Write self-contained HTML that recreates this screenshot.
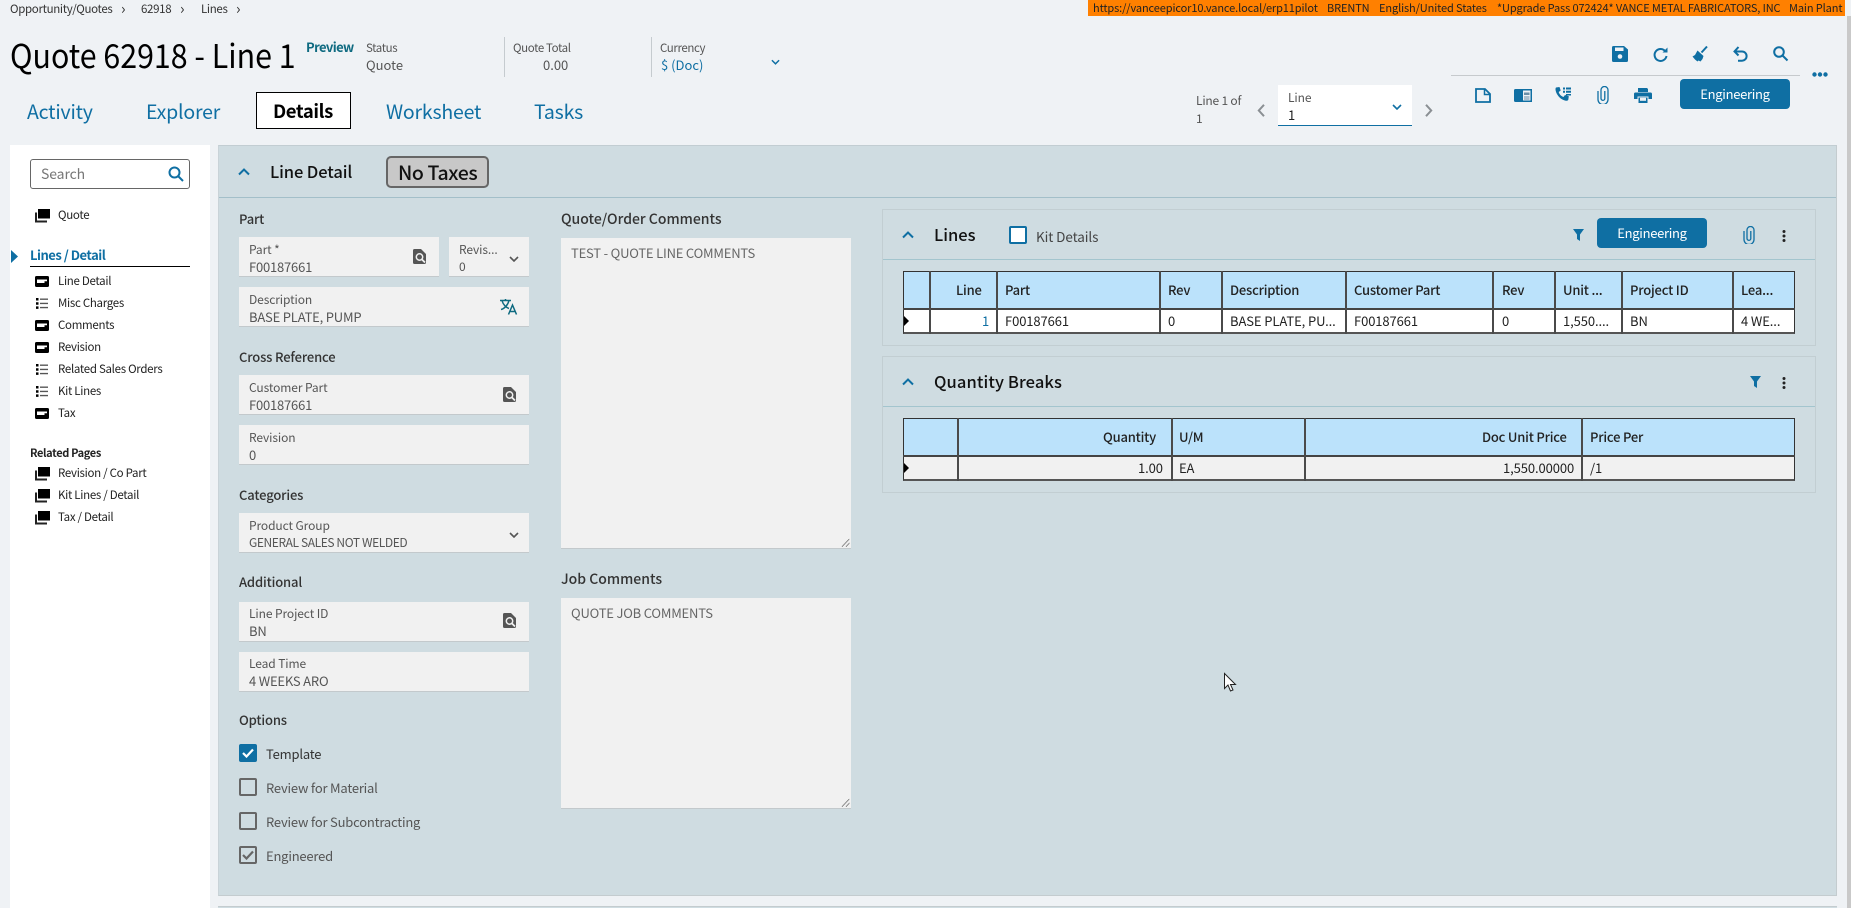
<!DOCTYPE html>
<html lang="en"><head><meta charset="utf-8"><title>Quote 62918 - Line 1</title>
<style>
html,body{margin:0;padding:0;width:1851px;height:908px;overflow:hidden;background:#eff2f5}
body{position:relative;font-family:"Noto Sans CJK JP","Liberation Sans",sans-serif;color:#222;font-size:13px}
.t{position:absolute;white-space:nowrap;line-height:20px;height:20px}
.b{position:absolute;box-sizing:border-box}
.i{position:absolute;overflow:visible}
.bl{fill:#0f6fa3}
.sl{fill:none;stroke:#0f6fa3;stroke-width:2}
.tab{font-size:19.5px;letter-spacing:-.2px;color:#0f6fa3;line-height:30px;height:30px}
.top{font-size:11.5px;letter-spacing:-.4px;color:#555}
.crumb{font-size:11.5px;letter-spacing:-.33px;color:#333}
.arr{font-size:15px;color:#333}
.org{font-size:11px;letter-spacing:-.11px;color:#222}
.nav{font-size:11.5px;letter-spacing:-.3px;color:#222}
.h{font-size:13px;letter-spacing:-.15px;font-weight:500;color:#333}
.h2{font-size:14px;font-weight:500;color:#333}
.f{position:absolute;box-sizing:border-box;background:#f1f1f1;border-bottom:1px solid #c3c9cc;height:40px}
.lb{font-size:12px;letter-spacing:-.1px;color:#555}
.v{font-size:13px;letter-spacing:-.2px;color:#555}
.ck{position:absolute;box-sizing:border-box;width:18px;height:18px;border:2px solid #666;border-radius:2px}
.c{font-size:13px;letter-spacing:-.2px;color:#555}
.p{position:absolute;box-sizing:border-box;border:1px solid #c2ced2}
.th{font-size:13px;letter-spacing:-.2px;font-weight:500;color:#222}
.td{font-size:13px;letter-spacing:-.1px;color:#222}
.sep{position:absolute;width:2px;background:#4a4a4a}
.btn{position:absolute;background:#0f6fa3;border-radius:4px;color:#fff;font-size:13px;letter-spacing:-.3px;line-height:30px;text-align:center;height:30px;width:110px}
</style></head><body>
<svg width="0" height="0" style="position:absolute">
<defs>
<symbol id="stack" viewBox="0 0 16 14"><path d="M4 0h12v9.500H4z" fill="#000"/><path d="M1 3.500h2V11.500H13V13.500H1z" fill="#222"/></symbol>
<symbol id="card" viewBox="0 0 14 11"><rect width="14" height="11" rx="1.500" fill="#000"/><path d="M2 3.500h10v1.800H9.500v1.700H2z" fill="#fff"/></symbol>
<symbol id="list" viewBox="0 0 12 11"><path d="M0 0h2.500v2.500H0zM0 4.200h2.500v2.500H0zM0 8.400h2.500v2.500H0z" fill="#000"/><path d="M4 .5h8v1.400H4zM4 4.700h8v1.400H4zM4 8.900h8v1.400H4z" fill="#555"/></symbol>
<symbol id="srch" viewBox="0 0 13 15"><path d="M1.500 0H8l5 5v8.500a1.500 1.500 0 0 1-1.500 1.500h-10A1.500 1.500 0 0 1 0 13.500v-12A1.500 1.500 0 0 1 1.500 0z" fill="#555"/><circle cx="6.500" cy="8" r="3.200" fill="#555" stroke="#f1f1f1" stroke-width="1.500"/><path d="M9 10.500l3 3" stroke="#f1f1f1" stroke-width="1.800"/></symbol>
<symbol id="clip" viewBox="0 0 12 18"><path d="M1 5v8.500a5 5 0 0 0 10 0V4a3.500 3.500 0 0 0-7 0v8.500a1.800 1.800 0 0 0 3.800 0V5" fill="none" stroke="#0f6fa3" stroke-width="1.300"/></symbol>
<symbol id="filter" viewBox="0 0 11 12"><path d="M0 0h11L7 5.500V12L4 10V5.500z" fill="#0f6fa3"/></symbol>
<symbol id="kebab" viewBox="0 0 4 12"><circle cx="2" cy="1.500" r="1.500" fill="#222"/><circle cx="2" cy="6" r="1.500" fill="#222"/><circle cx="2" cy="10.500" r="1.500" fill="#222"/></symbol>
<symbol id="down" viewBox="0 0 10 6"><path d="M1 1l4 4 4-4" fill="none" stroke="#0f6fa3" stroke-width="1.600"/></symbol>
<symbol id="downg" viewBox="0 0 10 6"><path d="M1 1l4 4 4-4" fill="none" stroke="#555" stroke-width="1.600"/></symbol>
<symbol id="up" viewBox="0 0 12 8"><path d="M1 6.500l5-5 5 5" fill="none" stroke="#0f6fa3" stroke-width="2"/></symbol>
<symbol id="ok" viewBox="0 0 12 10"><path d="M1 5l3.500 3.500L11 1.500" fill="none" stroke-width="2.200"/></symbol>
</defs></svg>

<!-- top -->
<div class="t crumb" style="left:10px;top:-1px">Opportunity/Quotes</div>
<div class="t arr" style="left:121px;top:-1px">›</div>
<div class="t crumb" style="left:141px;top:-1px">62918</div>
<div class="t arr" style="left:180px;top:-1px">›</div>
<div class="t crumb" style="left:201px;top:-1px">Lines</div>
<div class="t arr" style="left:236px;top:-1px">›</div>

<div class="b" style="left:1088px;top:0;width:757px;height:16px;background:#ff8000"></div>
<div class="t org" style="left:1093px;top:-2px">https://vanceepicor10.vance.local/erp11pilot</div>
<div class="t org" style="left:1327px;top:-2px">BRENTN</div>
<div class="t org" style="left:1379px;top:-2px">English/United States</div>
<div class="t org" style="left:1497px;top:-2px">*Upgrade Pass 072424* VANCE METAL FABRICATORS, INC</div>
<div class="t org" style="left:1789px;top:-2px">Main Plant</div>

<div class="t" style="left:10px;top:34px;font-size:33px;line-height:40px;height:40px;color:#000;transform:scaleX(.92);transform-origin:0 50%">Quote 62918 - Line 1</div>
<div class="t" style="left:306px;top:37px;font-size:13px;letter-spacing:-.6px;font-weight:700;color:#0e6a80">Preview</div>
<div class="t top" style="left:366px;top:38px">Status</div>
<div class="t" style="left:366px;top:55px;font-size:13px;color:#555">Quote</div>
<div class="b" style="left:504px;top:37px;width:1px;height:40px;background:#c5cbcf"></div>
<div class="t top" style="left:513px;top:38px">Quote Total</div>
<div class="t" style="left:543px;top:55px;font-size:13px;color:#555">0.00</div>
<div class="b" style="left:651px;top:37px;width:1px;height:40px;background:#c5cbcf"></div>
<div class="t top" style="left:660px;top:38px">Currency</div>
<div class="t" style="left:661px;top:55px;font-size:13px;color:#0f6fa3">$ (Doc)</div>
<svg class="i" style="left:771px;top:59px" width="9" height="6"><use href="#down"/></svg>

<div class="t tab" style="left:27px;top:96px">Activity</div>
<div class="t tab" style="left:146px;top:96px">Explorer</div>
<div class="b" style="left:256px;top:92px;width:95px;height:37px;background:#fff;border:1px solid #000"></div>
<div class="t tab" style="left:273px;top:96px;color:#000;font-weight:700;font-size:18.500px;letter-spacing:-.4px">Details</div>
<div class="t tab" style="left:386px;top:96px">Worksheet</div>
<div class="t tab" style="left:534px;top:96px">Tasks</div>

<div class="t" style="left:1196px;top:91px;font-size:12px;letter-spacing:-.2px;color:#555">Line 1 of</div>
<div class="t" style="left:1196px;top:109px;font-size:12px;color:#555">1</div>
<svg class="i" style="left:1257px;top:104px" width="8" height="13"><path d="M7 .8L1.800 6.500 7 12.200" fill="none" stroke="#8a8f93" stroke-width="2"/></svg>
<div class="b" style="left:1278px;top:85px;width:134px;height:41px;background:#fff;border-bottom:1px solid #0f6fa3"></div>
<div class="t lb" style="left:1288px;top:88px">Line</div>
<div class="t" style="left:1288px;top:105px;font-size:13px;color:#222">1</div>
<svg class="i" style="left:1392px;top:104px" width="10" height="6"><use href="#down"/></svg>
<svg class="i" style="left:1425px;top:104px" width="8" height="13"><path d="M1 .8l5.200 5.700L1 12.200" fill="none" stroke="#8a8f93" stroke-width="2"/></svg>

<!-- top right icons -->
<svg class="i" style="left:1612px;top:46px" width="16" height="16"><path d="M1.500 0H12l4 3.500v11a1.500 1.500 0 0 1-1.500 1.500h-13A1.500 1.500 0 0 1 0 14.500v-13A1.500 1.500 0 0 1 1.500 0z" class="bl"/><rect x="3" y="1.500" width="8.500" height="3.500" fill="#eff2f5"/><circle cx="8" cy="10.500" r="2.300" fill="#eff2f5"/></svg>
<svg class="i" style="left:1653px;top:47px" width="15" height="15"><path d="M12.500 4.500A6 6 0 1 0 13.500 9" class="sl"/><path d="M9.500 5.500h5V.5z" class="bl"/></svg>
<svg class="i" style="left:1691px;top:46px" width="18" height="17"><path d="M10.500 6.500L16 .5" class="sl"/><path d="M6.500 4.500l6 5.500-1 3-2 2.500-2-1-1 1-2.500-2-2.500-3 2.500-1.500z" class="bl"/></svg>
<svg class="i" style="left:1733px;top:46px" width="15" height="17"><path d="M1.500 5.500h7.500a4.600 4.600 0 0 1 0 9.200H5" class="sl"/><path d="M5.500 1L1.500 5.500 5.500 9.500" class="sl"/></svg>
<svg class="i" style="left:1773px;top:46px" width="15" height="15"><circle cx="6" cy="6" r="4.800" class="sl"/><path d="M9.500 9.500l5 5" class="sl"/></svg>
<div class="b" style="left:1451px;top:75px;width:349px;height:1px;background:#c6cacd"></div>
<svg class="i" style="left:1812px;top:72px" width="16" height="5"><circle cx="2.500" cy="2.500" r="2.200" class="bl"/><circle cx="8" cy="2.500" r="2.200" class="bl"/><circle cx="13.500" cy="2.500" r="2.200" class="bl"/></svg>
<svg class="i" style="left:1475px;top:88px" width="16" height="15"><path d="M1 1h9l5 5v8H1z" fill="none" stroke="#0f6fa3" stroke-width="1.800"/><path d="M9.500 1v5.500H15" fill="none" stroke="#0f6fa3" stroke-width="1.500"/></svg>
<svg class="i" style="left:1514px;top:89px" width="18" height="13"><path d="M1.500 0H18v13H1.500A1.500 1.500 0 0 1 0 11.500v-10A1.500 1.500 0 0 1 1.500 0z" class="bl"/><rect x="9" y="1.500" width="7.500" height="10" fill="#eff2f5"/><path d="M10 3.500h5.500v2.500H10z" fill="#6a8fa8"/><path d="M10 7.500h5.500v1H10zM10 9.500h5.500v1H10z" fill="#6a8fa8"/></svg>
<svg class="i" style="left:1555px;top:87px" width="16" height="16"><path d="M1 .5l3.500-.5 1.200 3.500-2 1.500c.8 2.500 2.300 4 4.800 5l1.500-2 3.800 1.300-.5 3.500c-.3.800-1 1-2 1C5.500 13 1 7.500.5 2.500 .5 1.500.6 1 1 .5z" class="bl"/><path d="M8 .5h2v2H8zM11 .5h5v2h-5zM8 3.800h2v2H8zM11 3.800h5v2h-5zM11 7h5v1.500h-5z" fill="#0f6fa3"/></svg>
<svg class="i" style="left:1597px;top:86px" width="12" height="18"><use href="#clip"/></svg>
<svg class="i" style="left:1634px;top:88px" width="18" height="15"><path d="M4 0h9l1 1v3H4z" class="bl"/><path d="M1.500 4.500h15A1.500 1.500 0 0 1 18 6v5h-3.500V8.500h-11V11H0V6a1.500 1.500 0 0 1 1.500-1.500z" class="bl"/><rect x="4.500" y="9.500" width="9" height="5.500" class="bl"/><rect x="6" y="9.800" width="6" height="3" fill="#eff2f5"/></svg>
<div class="btn" style="left:1680px;top:79px">Engineering</div>

<div class="b" style="left:1847px;top:16px;width:4px;height:892px;background:#c9c9c9"></div>

<!-- sidebar -->
<div class="b" style="left:10px;top:145px;width:200px;height:763px;background:#fff"></div>
<div class="b" style="left:30px;top:159px;width:160px;height:30px;border:1px solid #666;border-radius:3px;background:#fff"></div>
<div class="t" style="left:41px;top:164px;font-size:14px;letter-spacing:-.1px;color:#777">Search</div>
<svg class="i" style="left:168px;top:166px" width="16" height="16"><circle cx="6.500" cy="6.500" r="5" class="sl" stroke-width="1.800"/><path d="M10 10l5 5" class="sl"/></svg>

<svg class="i" style="left:34px;top:209px" width="16" height="14"><use href="#stack"/></svg>
<div class="t nav" style="left:58px;top:205px">Quote</div>
<svg class="i" style="left:11px;top:250px" width="7" height="13"><path d="M0 0l7 6.500L0 13z" class="bl"/></svg>
<div class="t" style="left:30px;top:245px;font-size:13px;letter-spacing:-.5px;font-weight:700;color:#0f6fa3">Lines / Detail</div>
<div class="b" style="left:30px;top:266px;width:160px;height:1px;background:#000"></div>

<svg class="i" style="left:35px;top:276px" width="14" height="11"><use href="#card"/></svg><div class="t nav" style="left:58px;top:271px">Line Detail</div>
<svg class="i" style="left:36px;top:298px" width="12" height="11"><use href="#list"/></svg><div class="t nav" style="left:58px;top:293px">Misc Charges</div>
<svg class="i" style="left:35px;top:320px" width="14" height="11"><use href="#card"/></svg><div class="t nav" style="left:58px;top:315px">Comments</div>
<svg class="i" style="left:35px;top:342px" width="14" height="11"><use href="#card"/></svg><div class="t nav" style="left:58px;top:337px">Revision</div>
<svg class="i" style="left:36px;top:364px" width="12" height="11"><use href="#list"/></svg><div class="t nav" style="left:58px;top:359px">Related Sales Orders</div>
<svg class="i" style="left:36px;top:386px" width="12" height="11"><use href="#list"/></svg><div class="t nav" style="left:58px;top:381px">Kit Lines</div>
<svg class="i" style="left:35px;top:408px" width="14" height="11"><use href="#card"/></svg><div class="t nav" style="left:58px;top:403px">Tax</div>
<div class="t" style="left:30px;top:443px;font-size:11px;letter-spacing:-.35px;font-weight:700;color:#222">Related Pages</div>
<svg class="i" style="left:34px;top:467px" width="16" height="14"><use href="#stack"/></svg><div class="t nav" style="left:58px;top:463px">Revision / Co Part</div>
<svg class="i" style="left:34px;top:489px" width="16" height="14"><use href="#stack"/></svg><div class="t nav" style="left:58px;top:485px">Kit Lines / Detail</div>
<svg class="i" style="left:34px;top:511px" width="16" height="14"><use href="#stack"/></svg><div class="t nav" style="left:58px;top:507px">Tax / Detail</div>

<!-- main panel -->
<div class="b" style="left:218px;top:145px;width:1619px;height:751px;background:#cfdce1;border-top:1px solid #c2cdd2;border-bottom:1px solid #c4cccf;border-left:1px solid #c9d3d8;border-right:1px solid #c4cccf"></div>
<div class="b" style="left:218px;top:906px;width:1619px;height:2px;background:#cfdce1;border-top:1px solid #c4cccf"></div>
<svg class="i" style="left:238px;top:168px" width="12" height="8"><use href="#up"/></svg>
<div class="t" style="left:270px;top:161px;font-size:16.500px;letter-spacing:-.1px;font-weight:500;color:#111">Line Detail</div>
<div class="b" style="left:386px;top:156px;width:103px;height:32px;background:#c8c8c8;border:2px solid #666;border-radius:5px"></div>
<div class="t" style="left:398px;top:162px;font-size:19.500px;letter-spacing:-.4px;font-weight:500;color:#111">No Taxes</div>
<div class="b" style="left:219px;top:197px;width:1617px;height:1px;background:#a3bfc9"></div>

<div class="t h" style="left:239px;top:209px">Part</div>
<div class="f" style="left:239px;top:237px;width:200px"></div>
<div class="t lb" style="left:249px;top:240px">Part *</div>
<div class="t v" style="left:249px;top:257px">F00187661</div>
<svg class="i" style="left:413px;top:249px" width="13" height="15"><use href="#srch"/></svg>
<div class="f" style="left:449px;top:237px;width:80px"></div>
<div class="t lb" style="left:459px;top:240px">Revis...</div>
<div class="t v" style="left:459px;top:257px;font-size:12px">0</div>
<svg class="i" style="left:509px;top:256px" width="10" height="6"><use href="#downg"/></svg>
<div class="f" style="left:239px;top:287px;width:290px"></div>
<div class="t lb" style="left:249px;top:290px">Description</div>
<div class="t v" style="left:249px;top:307px">BASE PLATE, PUMP</div>
<svg class="i" style="left:500px;top:299px" width="18" height="16"><path d="M0 1.500h11M5.500 0v1.500M2 1.500c1 4 4 7 7 8M9 1.500c-1 4-4 8-8 9" fill="none" stroke="#0e6a80" stroke-width="1.500"/><path d="M8.500 15.500L12.500 6l4 9.500M10 12.500h5" fill="none" stroke="#0e6a80" stroke-width="1.500"/></svg>

<div class="t h" style="left:239px;top:347px">Cross Reference</div>
<div class="f" style="left:239px;top:375px;width:290px"></div>
<div class="t lb" style="left:249px;top:378px">Customer Part</div>
<div class="t v" style="left:249px;top:395px">F00187661</div>
<svg class="i" style="left:503px;top:387px" width="13" height="15"><use href="#srch"/></svg>
<div class="f" style="left:239px;top:425px;width:290px"></div>
<div class="t lb" style="left:249px;top:428px">Revision</div>
<div class="t v" style="left:249px;top:445px">0</div>

<div class="t h" style="left:239px;top:485px">Categories</div>
<div class="f" style="left:239px;top:513px;width:290px"></div>
<div class="t lb" style="left:249px;top:516px">Product Group</div>
<div class="t v" style="left:249px;top:533px;font-size:12px;letter-spacing:-.4px">GENERAL SALES NOT WELDED</div>
<svg class="i" style="left:509px;top:532px" width="10" height="6"><use href="#downg"/></svg>

<div class="t h" style="left:239px;top:572px">Additional</div>
<div class="f" style="left:239px;top:602px;width:290px"></div>
<div class="t lb" style="left:249px;top:604px">Line Project ID</div>
<div class="t v" style="left:249px;top:621px">BN</div>
<svg class="i" style="left:503px;top:613px" width="13" height="15"><use href="#srch"/></svg>
<div class="f" style="left:239px;top:652px;width:290px"></div>
<div class="t lb" style="left:249px;top:654px">Lead Time</div>
<div class="t v" style="left:249px;top:671px">4 WEEKS ARO</div>

<div class="t h" style="left:239px;top:710px">Options</div>
<div class="ck" style="left:239px;top:744px;background:#0f6fa3;border-color:#0f6fa3"></div>
<svg class="i" style="left:242px;top:748px" width="12" height="10" stroke="#fff"><use href="#ok"/></svg>
<div class="t c" style="left:266px;top:744px;color:#333">Template</div>
<div class="ck" style="left:239px;top:778px"></div>
<div class="t c" style="left:266px;top:778px">Review for Material</div>
<div class="ck" style="left:239px;top:812px"></div>
<div class="t c" style="left:266px;top:812px">Review for Subcontracting</div>
<div class="ck" style="left:239px;top:846px"></div>
<svg class="i" style="left:242px;top:850px" width="12" height="10" stroke="#666"><use href="#ok"/></svg>
<div class="t c" style="left:266px;top:846px">Engineered</div>

<!-- comments -->
<div class="t h2" style="left:561px;top:209px">Quote/Order Comments</div>
<div class="b" style="left:561px;top:238px;width:290px;height:311px;background:#f1f1f1;border-bottom:1px solid #c3c9cc"></div>
<div class="t v" style="left:571px;top:243px;color:#666">TEST - QUOTE LINE COMMENTS</div>
<svg class="i" style="left:842px;top:539px" width="8" height="8"><path d="M0 7.500L7.500 0M4 7.500L7.500 4" stroke="#555" stroke-width="1" stroke-dasharray="1 .5"/></svg>
<div class="t h2" style="left:561px;top:569px">Job Comments</div>
<div class="b" style="left:561px;top:598px;width:290px;height:211px;background:#f1f1f1;border-bottom:1px solid #c3c9cc"></div>
<div class="t v" style="left:571px;top:603px;color:#666">QUOTE JOB COMMENTS</div>
<svg class="i" style="left:842px;top:799px" width="8" height="8"><path d="M0 7.500L7.500 0M4 7.500L7.500 4" stroke="#555" stroke-width="1" stroke-dasharray="1 .5"/></svg>

<!-- Lines panel -->
<div class="p" style="left:882px;top:209px;width:934px;height:137px"></div>
<div class="b" style="left:883px;top:259px;width:932px;height:1px;background:#a3c5ce"></div>
<svg class="i" style="left:902px;top:231px" width="12" height="8"><use href="#up"/></svg>
<div class="t" style="left:934px;top:224px;font-size:16.500px;font-weight:500;color:#111">Lines</div>
<div class="b" style="left:1009px;top:226px;width:18px;height:18px;border:2px solid #0f6fa3;border-radius:2px;background:#fff"></div>
<div class="t" style="left:1036px;top:226px;font-size:13.500px;letter-spacing:-.1px;color:#444">Kit Details</div>
<svg class="i" style="left:1573px;top:229px" width="11" height="12"><use href="#filter"/></svg>
<div class="btn" style="left:1597px;top:218px">Engineering</div>
<svg class="i" style="left:1743px;top:226px" width="12" height="18"><use href="#clip"/></svg>
<svg class="i" style="left:1782px;top:230px" width="4" height="12"><use href="#kebab"/></svg>

<div class="b" style="left:903px;top:271px;width:892px;height:63px;background:#fff"></div>
<div class="b" style="left:903px;top:271px;width:892px;height:38px;background:#bbe2fb"></div>
<div class="b" style="left:903px;top:271px;width:892px;height:63px;border:1px solid #333;border-bottom:2px solid #555"></div>
<div class="b" style="left:903px;top:308px;width:892px;height:2px;background:#444"></div>
<div class="sep" style="left:929px;top:271px;height:63px"></div>
<div class="sep" style="left:996px;top:271px;height:63px"></div>
<div class="sep" style="left:1159px;top:271px;height:63px"></div>
<div class="sep" style="left:1221px;top:271px;height:63px"></div>
<div class="sep" style="left:1345px;top:271px;height:63px"></div>
<div class="sep" style="left:1492px;top:271px;height:63px"></div>
<div class="sep" style="left:1554px;top:271px;height:63px"></div>
<div class="sep" style="left:1621px;top:271px;height:63px"></div>
<div class="sep" style="left:1732px;top:271px;height:63px"></div>
<svg class="i" style="left:904px;top:316px" width="5" height="10"><path d="M0 0l5 5-5 5z" fill="#000"/></svg>
<div class="t th" style="left:956px;top:280px">Line</div>
<div class="t th" style="left:1005px;top:280px">Part</div>
<div class="t th" style="left:1168px;top:280px">Rev</div>
<div class="t th" style="left:1230px;top:280px">Description</div>
<div class="t th" style="left:1354px;top:280px">Customer Part</div>
<div class="t th" style="left:1502px;top:280px">Rev</div>
<div class="t th" style="left:1563px;top:280px">Unit ...</div>
<div class="t th" style="left:1630px;top:280px">Project ID</div>
<div class="t th" style="left:1741px;top:280px">Lea...</div>
<div class="t td" style="left:982px;top:311px;color:#0f6fa3">1</div>
<div class="t td" style="left:1005px;top:311px">F00187661</div>
<div class="t td" style="left:1168px;top:311px">0</div>
<div class="t td" style="left:1230px;top:311px">BASE PLATE, PU...</div>
<div class="t td" style="left:1354px;top:311px">F00187661</div>
<div class="t td" style="left:1502px;top:311px">0</div>
<div class="t td" style="left:1563px;top:311px">1,550....</div>
<div class="t td" style="left:1630px;top:311px">BN</div>
<div class="t td" style="left:1741px;top:311px">4 WE...</div>

<!-- Quantity Breaks -->
<div class="p" style="left:882px;top:356px;width:934px;height:137px"></div>
<div class="b" style="left:883px;top:406px;width:932px;height:1px;background:#a3c5ce"></div>
<svg class="i" style="left:902px;top:378px" width="12" height="8"><use href="#up"/></svg>
<div class="t" style="left:934px;top:371px;font-size:16.500px;letter-spacing:.1px;font-weight:500;color:#111">Quantity Breaks</div>
<svg class="i" style="left:1750px;top:376px" width="11" height="12"><use href="#filter"/></svg>
<svg class="i" style="left:1782px;top:377px" width="4" height="12"><use href="#kebab"/></svg>

<div class="b" style="left:903px;top:418px;width:892px;height:63px;background:#f1f1f1"></div>
<div class="b" style="left:903px;top:418px;width:892px;height:38px;background:#bbe2fb"></div>
<div class="b" style="left:903px;top:418px;width:892px;height:63px;border:1px solid #333;border-bottom:2px solid #555"></div>
<div class="b" style="left:903px;top:455px;width:892px;height:2px;background:#444"></div>
<div class="sep" style="left:957px;top:418px;height:63px"></div>
<div class="sep" style="left:1171px;top:418px;height:63px"></div>
<div class="sep" style="left:1304px;top:418px;height:63px"></div>
<div class="sep" style="left:1581px;top:418px;height:63px"></div>
<svg class="i" style="left:904px;top:463px" width="5" height="10"><path d="M0 0l5 5-5 5z" fill="#000"/></svg>
<div class="t th" style="left:1103px;top:427px">Quantity</div>
<div class="t th" style="left:1179px;top:427px">U/M</div>
<div class="t th" style="left:1482px;top:427px">Doc Unit Price</div>
<div class="t th" style="left:1590px;top:427px">Price Per</div>
<div class="t td" style="left:1138px;top:458px">1.00</div>
<div class="t td" style="left:1179px;top:458px">EA</div>
<div class="t td" style="left:1503px;top:458px">1,550.00000</div>
<div class="t td" style="left:1590px;top:458px">/1</div>

<!-- cursor -->
<svg class="i" style="left:1224px;top:673px" width="13" height="19"><path d="M.5.500v15l3.500-3.500 2.500 6 2.500-1-2.500-5.500h5z" fill="#fff" stroke="#222" stroke-width="1"/></svg>
</body></html>
